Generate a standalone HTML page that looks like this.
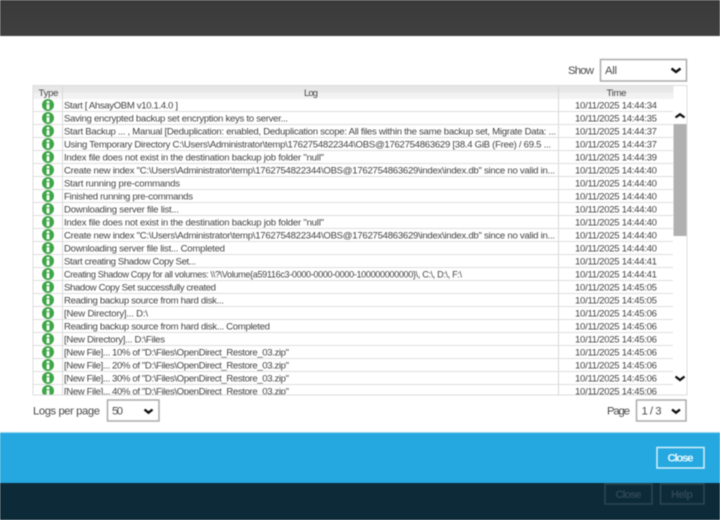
<!DOCTYPE html>
<html><head><meta charset="utf-8"><style>
html,body{margin:0;padding:0;background:#fff;width:720px;height:520px;overflow:hidden}
svg{display:block;filter:blur(.4px)}
text{font-family:"Liberation Sans",sans-serif;fill:#444}
.u{font-size:11.300px;fill:#4a4a4a}
</style></head><body>
<svg width="720" height="520" viewBox="0 0 720 520" xmlns="http://www.w3.org/2000/svg">
<defs>
<linearGradient id="h" x1="0" y1="0" x2="0" y2="1"><stop offset="0" stop-color="#e6e6e6"/><stop offset=".5" stop-color="#e9e9e9"/><stop offset=".55" stop-color="#f1f1f1"/><stop offset="1" stop-color="#f3f3f3"/></linearGradient>
<linearGradient id="top" x1="0" y1="0" x2="0" y2="1"><stop offset="0" stop-color="#3a3a3a"/><stop offset="1" stop-color="#404040"/></linearGradient>
<clipPath id="c"><rect x="33" y="98" width="641" height="296.500"/></clipPath>
<g id="i"><circle cx="48" cy="0" r="6" fill="#3fa648"/><rect x="46.600" y="-4" width="2.800" height="2.300" fill="#fff"/><rect x="46.600" y="-.8" width="2.800" height="5" fill="#fff"/></g>
</defs>
<rect width="720" height="520" fill="#fff"/>
<rect width="720" height="36" fill="url(#top)"/>

<text class="u" x="568" y="74" textLength="26">Show</text>
<rect x="600.500" y="59.500" width="86" height="21.500" fill="#fff" stroke="#ababab" stroke-width="1.500"/>
<text class="u" x="605" y="74" textLength="12">All</text>
<path d="M671.500 68.500l4.500 3.500 4.500-3.500" fill="none" stroke="#111" stroke-width="2.400"/>

<rect x="33" y="85.500" width="654" height="309.500" fill="#fff" stroke="#dcdcdc"/>
<rect x="33.500" y="86" width="640" height="13" fill="url(#h)"/>
<line x1="62.500" y1="86" x2="62.500" y2="395" stroke="#d8d8d8"/>
<line x1="558.500" y1="86" x2="558.500" y2="395" stroke="#d8d8d8"/>
<text x="38.500" y="96" font-size="9.600" textLength="20">Type</text>
<text x="304" y="96" font-size="9.600" textLength="14">Log</text>
<text x="606.500" y="96" font-size="9.600" textLength="20">Time</text>

<g stroke="#dedede" stroke-width="1">
<line x1="33" x2="673" y1="111.500" y2="111.500"/><line x1="33" x2="673" y1="124.500" y2="124.500"/><line x1="33" x2="673" y1="137.500" y2="137.500"/><line x1="33" x2="673" y1="150.500" y2="150.500"/><line x1="33" x2="673" y1="163.500" y2="163.500"/><line x1="33" x2="673" y1="176.500" y2="176.500"/><line x1="33" x2="673" y1="189.500" y2="189.500"/><line x1="33" x2="673" y1="202.500" y2="202.500"/><line x1="33" x2="673" y1="215.500" y2="215.500"/><line x1="33" x2="673" y1="228.500" y2="228.500"/><line x1="33" x2="673" y1="241.500" y2="241.500"/><line x1="33" x2="673" y1="254.500" y2="254.500"/><line x1="33" x2="673" y1="267.500" y2="267.500"/><line x1="33" x2="673" y1="280.500" y2="280.500"/><line x1="33" x2="673" y1="293.500" y2="293.500"/><line x1="33" x2="673" y1="306.500" y2="306.500"/><line x1="33" x2="673" y1="319.500" y2="319.500"/><line x1="33" x2="673" y1="332.500" y2="332.500"/><line x1="33" x2="673" y1="345.500" y2="345.500"/><line x1="33" x2="673" y1="358.500" y2="358.500"/><line x1="33" x2="673" y1="371.500" y2="371.500"/><line x1="33" x2="673" y1="384.500" y2="384.500"/>
</g>

<g clip-path="url(#c)">
<use href="#i" y="105"/><use href="#i" y="118"/><use href="#i" y="131"/><use href="#i" y="144"/><use href="#i" y="157"/><use href="#i" y="170"/><use href="#i" y="183"/><use href="#i" y="196"/><use href="#i" y="209"/><use href="#i" y="222"/><use href="#i" y="235"/><use href="#i" y="248"/><use href="#i" y="261"/><use href="#i" y="274"/><use href="#i" y="287"/><use href="#i" y="300"/><use href="#i" y="313"/><use href="#i" y="326"/><use href="#i" y="339"/><use href="#i" y="352"/><use href="#i" y="365"/><use href="#i" y="378"/><use href="#i" y="391"/>
<g font-size="9.600">
<text x="64" y="108.400" textLength="114">Start [ AhsayOBM v10.1.4.0 ]</text>
<text x="64" y="121.400" textLength="224">Saving encrypted backup set encryption keys to server...</text>
<text x="64" y="134.400" textLength="492">Start Backup ... , Manual [Deduplication: enabled, Deduplication scope: All files within the same backup set, Migrate Data: ...</text>
<text x="64" y="147.400" textLength="487">Using Temporary Directory C:\Users\Administrator\temp\1762754822344\OBS@1762754863629 [38.4 GiB (Free) / 69.5 ...</text>
<text x="64" y="160.400" textLength="260">Index file does not exist in the destination backup job folder "null"</text>
<text x="64" y="173.400" textLength="491">Create new index "C:\Users\Administrator\temp\1762754822344\OBS@1762754863629\index\index.db" since no valid in...</text>
<text x="64" y="186.400" textLength="116">Start running pre-commands</text>
<text x="64" y="199.400" textLength="129">Finished running pre-commands</text>
<text x="64" y="212.400" textLength="115">Downloading server file list...</text>
<text x="64" y="225.400" textLength="260">Index file does not exist in the destination backup job folder "null"</text>
<text x="64" y="238.400" textLength="491">Create new index "C:\Users\Administrator\temp\1762754822344\OBS@1762754863629\index\index.db" since no valid in...</text>
<text x="64" y="251.400" textLength="161">Downloading server file list... Completed</text>
<text x="64" y="264.400" textLength="132">Start creating Shadow Copy Set...</text>
<text x="64" y="277.400" font-size="9.100" textLength="398">Creating Shadow Copy for all volumes: \\?\Volume{a59116c3-0000-0000-0000-100000000000}\, C:\, D:\, F:\</text>
<text x="64" y="290.400" textLength="152">Shadow Copy Set successfully created</text>
<text x="64" y="303.400" textLength="160">Reading backup source from hard disk...</text>
<text x="64" y="316.400" textLength="84">[New Directory]... D:\</text>
<text x="64" y="329.400" textLength="206">Reading backup source from hard disk... Completed</text>
<text x="64" y="342.400" textLength="101">[New Directory]... D:\Files</text>
<text x="64" y="355.400" textLength="225">[New File]... 10% of "D:\Files\OpenDirect_Restore_03.zip"</text>
<text x="64" y="368.400" textLength="225">[New File]... 20% of "D:\Files\OpenDirect_Restore_03.zip"</text>
<text x="64" y="381.400" textLength="225">[New File]... 30% of "D:\Files\OpenDirect_Restore_03.zip"</text>
<text x="64" y="394.400" textLength="225">[New File]... 40% of "D:\Files\OpenDirect_Restore_03.zip"</text>
</g>
<g font-size="9.600">
<text x="575" y="108.400" textLength="82">10/11/2025 14:44:34</text>
<text x="575" y="121.400" textLength="82">10/11/2025 14:44:35</text>
<text x="575" y="134.400" textLength="82">10/11/2025 14:44:37</text>
<text x="575" y="147.400" textLength="82">10/11/2025 14:44:37</text>
<text x="575" y="160.400" textLength="82">10/11/2025 14:44:39</text>
<text x="575" y="173.400" textLength="82">10/11/2025 14:44:40</text>
<text x="575" y="186.400" textLength="82">10/11/2025 14:44:40</text>
<text x="575" y="199.400" textLength="82">10/11/2025 14:44:40</text>
<text x="575" y="212.400" textLength="82">10/11/2025 14:44:40</text>
<text x="575" y="225.400" textLength="82">10/11/2025 14:44:40</text>
<text x="575" y="238.400" textLength="82">10/11/2025 14:44:40</text>
<text x="575" y="251.400" textLength="82">10/11/2025 14:44:40</text>
<text x="575" y="264.400" textLength="82">10/11/2025 14:44:41</text>
<text x="575" y="277.400" textLength="82">10/11/2025 14:44:41</text>
<text x="575" y="290.400" textLength="82">10/11/2025 14:45:05</text>
<text x="575" y="303.400" textLength="82">10/11/2025 14:45:05</text>
<text x="575" y="316.400" textLength="82">10/11/2025 14:45:06</text>
<text x="575" y="329.400" textLength="82">10/11/2025 14:45:06</text>
<text x="575" y="342.400" textLength="82">10/11/2025 14:45:06</text>
<text x="575" y="355.400" textLength="82">10/11/2025 14:45:06</text>
<text x="575" y="368.400" textLength="82">10/11/2025 14:45:06</text>
<text x="575" y="381.400" textLength="82">10/11/2025 14:45:06</text>
<text x="575" y="394.400" textLength="82">10/11/2025 14:45:06</text>
</g>
</g>

<rect x="673.500" y="124" width="13" height="112" fill="#b0b0b0"/>
<path d="M675.500 117.500l4.500-3.200 4.500 3.200" fill="none" stroke="#111" stroke-width="2.300"/>
<path d="M675.500 376.500l4.500 3.500 4.500-3.500" fill="none" stroke="#111" stroke-width="2.300"/>

<text class="u" x="33" y="414.500" textLength="67">Logs per page</text>
<rect x="107.500" y="400" width="51.500" height="21" fill="#fff" stroke="#ababab" stroke-width="1.500"/>
<text class="u" x="112" y="414.500" textLength="11">50</text>
<path d="M144.500 409.500l4 3.200 4-3.200" fill="none" stroke="#111" stroke-width="2.400"/>
<text class="u" x="607" y="414.500" textLength="23">Page</text>
<rect x="636.500" y="400" width="49.500" height="21" fill="#fff" stroke="#ababab" stroke-width="1.500"/>
<text class="u" x="641.500" y="414.500" textLength="20">1 / 3</text>
<path d="M672 409.500l4 3.200 4-3.200" fill="none" stroke="#111" stroke-width="2.400"/>

<rect y="432" width="720" height="1.500" fill="#9ad8f2"/>
<rect y="433" width="720" height="50" fill="#25a7df"/>
<rect y="483" width="720" height="37" fill="#0d2a38"/>
<rect x="657" y="447.500" width="47" height="20.500" fill="#25a7df" stroke="#d4f1fb" stroke-width="1.500"/>
<text x="667.500" y="461.500" font-size="11.300" style="fill:#e6f7fd;font-weight:bold" textLength="26">Close</text>
<rect x="605" y="484" width="47" height="20" fill="none" stroke="#2d4653" stroke-width="1.500"/>
<text x="615.500" y="498" font-size="11" style="fill:#2d4653;font-weight:bold" textLength="26">Close</text>
<rect x="660.500" y="484" width="43.500" height="20" fill="none" stroke="#2d4653" stroke-width="1.500"/>
<text x="671" y="498" font-size="11" style="fill:#2d4653;font-weight:bold" textLength="22">Help</text>
</svg>
</body></html>
